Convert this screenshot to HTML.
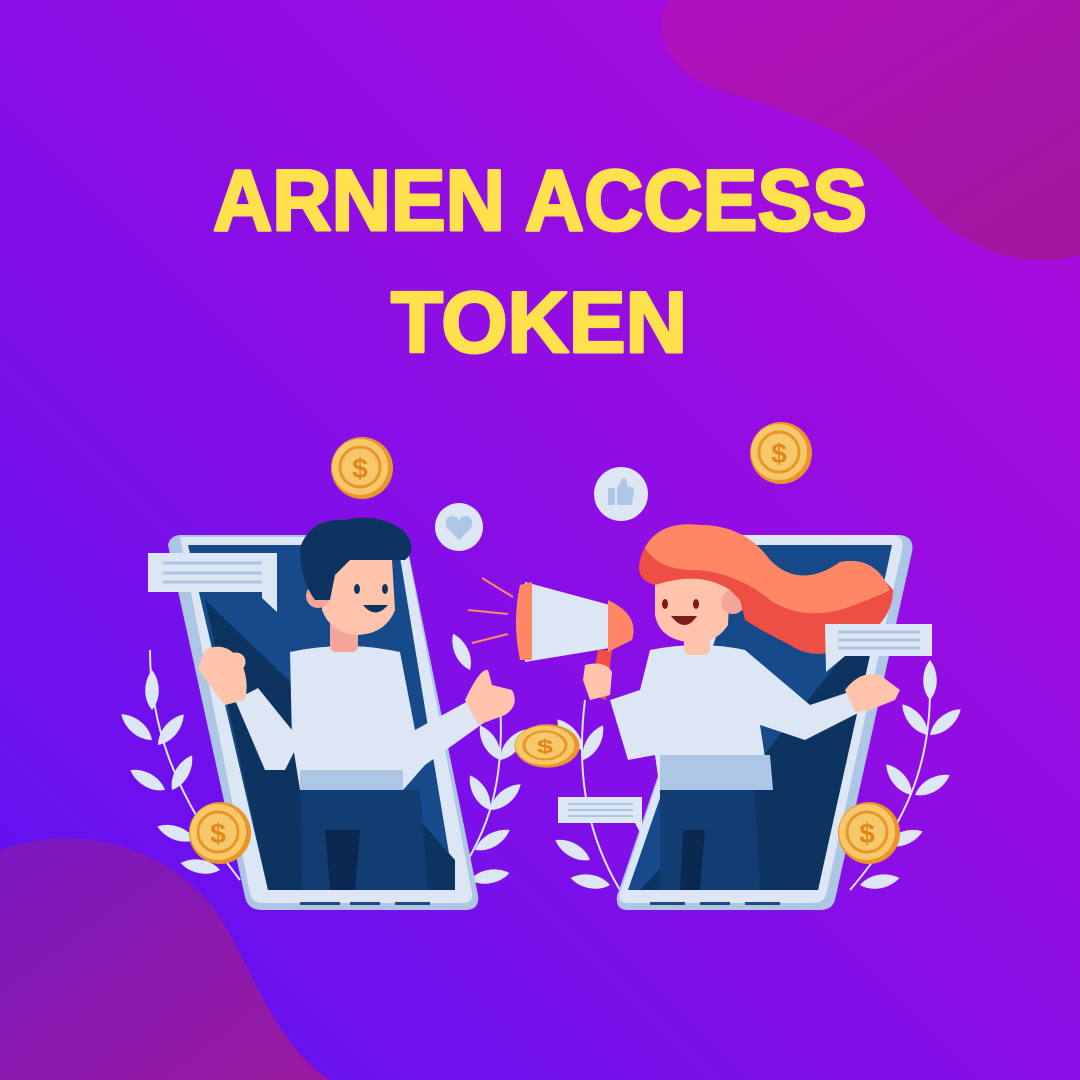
<!DOCTYPE html>
<html><head><meta charset="utf-8"><style>html,body{margin:0;padding:0;width:1080px;height:1080px;overflow:hidden}</style></head><body>
<svg width="1080" height="1080" viewBox="0 0 1080 1080" xmlns="http://www.w3.org/2000/svg">
<defs>
<linearGradient id="bg" x1="0" y1="1" x2="1" y2="0">
<stop offset="0" stop-color="#5a12f2"/><stop offset="0.5" stop-color="#8a0ee6"/><stop offset="1" stop-color="#b00ad8"/>
</linearGradient>
<linearGradient id="b1" x1="0" y1="0" x2="1" y2="1">
<stop offset="0" stop-color="#b010c0"/><stop offset="1" stop-color="#a0169a"/>
</linearGradient>
<linearGradient id="b2" x1="0" y1="0" x2="1" y2="1">
<stop offset="0" stop-color="#7a18c0"/><stop offset="1" stop-color="#9a1a9e"/>
</linearGradient>
<g id="coin"><circle r="31" fill="#e8962a"/><circle r="28" fill="#f7c86a" cx="-2" cy="-1"/><circle r="20" fill="none" stroke="#e8962a" stroke-width="3" cx="-2" cy="-1"/><text x="-2" y="10" font-family="Liberation Sans" font-weight="bold" font-size="28" fill="#e0861a" text-anchor="middle">$</text></g>
<g id="leaf"><path d="M0 0 C-10 -12 -8 -30 0 -40 C8 -30 10 -12 0 0Z" fill="#dce6f4"/></g>
</defs>
<rect width="1080" height="1080" fill="url(#bg)"/>
<path d="M670 0 L1080 0 L1080 255 C1000 275 940 230 900 180 C860 130 780 110 720 90 C660 70 650 20 670 0Z" fill="url(#b1)"/>
<path d="M0 850 C80 820 170 850 215 910 C250 960 270 1040 330 1080 L0 1080Z" fill="url(#b2)"/>
<g font-family="Liberation Sans" font-weight="bold" font-size="86" fill="#ffe14d" stroke="#ffe14d" stroke-width="3" stroke-linejoin="round">
<text x="540" y="230" text-anchor="middle" textLength="654" lengthAdjust="spacingAndGlyphs">ARNEN ACCESS</text>
<text x="539" y="352" text-anchor="middle" textLength="296" lengthAdjust="spacingAndGlyphs">TOKEN</text>
</g>

<!-- laurels -->
<g>
<path d="M150 650 C150 720 170 790 240 880" stroke="#dce6f4" stroke-width="2" fill="none"/>
<use href="#leaf" transform="translate(152,710) rotate(0)"/>
<use href="#leaf" transform="translate(152,740) rotate(-50)"/>
<use href="#leaf" transform="translate(158,745) rotate(40)"/>
<use href="#leaf" transform="translate(165,790) rotate(-60)"/>
<use href="#leaf" transform="translate(172,790) rotate(30)"/>
<use href="#leaf" transform="translate(195,840) rotate(-70)"/>
<use href="#leaf" transform="translate(220,870) rotate(-80)"/>
<path d="M500 700 C505 780 490 830 455 880" stroke="#dce6f4" stroke-width="2" fill="none"/>
<use href="#leaf" transform="translate(470,670) rotate(-25)"/>
<use href="#leaf" transform="translate(500,760) rotate(-30)"/>
<use href="#leaf" transform="translate(500,760) rotate(40)"/>
<use href="#leaf" transform="translate(490,810) rotate(-30)"/>
<use href="#leaf" transform="translate(490,810) rotate(50)"/>
<use href="#leaf" transform="translate(475,850) rotate(60)"/>
<use href="#leaf" transform="translate(470,880) rotate(80)"/>
<path d="M585 700 C575 780 590 840 620 890" stroke="#dce6f4" stroke-width="2" fill="none"/>
<use href="#leaf" transform="translate(583,750) rotate(-40)"/>
<use href="#leaf" transform="translate(583,760) rotate(30)"/>
<use href="#leaf" transform="translate(590,860) rotate(-60)"/>
<use href="#leaf" transform="translate(610,885) rotate(-80)"/>
<path d="M930 690 C930 760 910 820 850 890" stroke="#dce6f4" stroke-width="2" fill="none"/>
<use href="#leaf" transform="translate(930,700) rotate(0)"/>
<use href="#leaf" transform="translate(928,735) rotate(-40)"/>
<use href="#leaf" transform="translate(930,735) rotate(50)"/>
<use href="#leaf" transform="translate(912,795) rotate(-40)"/>
<use href="#leaf" transform="translate(915,795) rotate(60)"/>
<use href="#leaf" transform="translate(885,845) rotate(70)"/>
<use href="#leaf" transform="translate(860,885) rotate(80)"/>
</g>

<!-- left phone -->
<path d="M168 545 Q170 535 182 535 L405 535 L478 895 Q480 910 465 910 L262 910 Q248 910 245 897Z" fill="#aec6e6"/>
<path d="M180 537 L405 537 L472 893 Q473 903 463 903 L262 903 Q252 903 250 893Z" fill="#dce6f4"/>
<path d="M188 545 L398 545 L455 890 L268 890Z" fill="#164a8a"/>
<path d="M205 600 L330 720 L455 860 L455 890 L268 890Z" fill="#0d3461"/>
<rect x="300" y="902" width="40" height="3" fill="#274a7e"/><rect x="350" y="902" width="30" height="3" fill="#274a7e"/><rect x="395" y="902" width="35" height="3" fill="#274a7e"/>

<!-- right phone -->
<path d="M740 535 L900 535 Q915 537 912 552 L835 900 Q832 910 820 910 L628 910 Q615 910 617 896Z" fill="#aec6e6"/>
<path d="M740 535 L893 535 Q905 537 902 550 L826 895 Q823 903 813 903 L628 903 Q617 903 620 893Z" fill="#dce6f4"/>
<path d="M748 545 L892 545 L818 890 L628 890Z" fill="#164a8a"/>
<path d="M880 610 L818 890 L640 890 L760 760Z" fill="#0d3461"/>
<rect x="650" y="902" width="35" height="3" fill="#274a7e"/><rect x="700" y="902" width="30" height="3" fill="#274a7e"/><rect x="745" y="902" width="35" height="3" fill="#274a7e"/>

<!-- man -->
<path d="M300 790 L420 790 L428 890 L302 890Z" fill="#123d73"/>
<path d="M325 830 L360 830 L355 890 L330 890Z" fill="#0a2850"/>
<path d="M235 700 L258 688 L300 740 L285 770 L265 770Z" fill="#dce6f4"/>
<path d="M290 652 Q345 640 400 652 L415 730 L470 700 L485 722 L425 765 L403 790 L300 790 L292 740Z" fill="#dce6f4"/>
<path d="M300 770 L403 770 L403 790 L300 790Z" fill="#aec6e6"/>
<path d="M205 650 Q225 640 240 660 Q250 680 245 700 L225 705 Q205 680 198 668Z" fill="#ffc4ab"/>
<circle cx="236" cy="662" r="7" fill="none" stroke="#ffc4ab" stroke-width="5"/>
<path d="M465 700 Q480 668 488 670 L492 685 L512 690 Q520 705 505 715 L478 725Z" fill="#ffc4ab"/>
<rect x="330" y="620" width="28" height="32" rx="6" fill="#f4a69a"/>
<path d="M322 560 Q350 545 392 560 L395 610 Q385 635 355 635 Q330 632 322 610Z" fill="#ffc4ab"/>
<circle cx="318" cy="596" r="12" fill="#f4a69a"/>
<path d="M300 548 Q310 518 345 520 Q380 512 405 532 Q418 550 405 560 Q370 560 350 560 L335 575 L330 600 L315 600 Q300 580 300 548Z" fill="#0d3461"/>
<ellipse cx="357" cy="589" rx="3" ry="5" fill="#0d3461"/><ellipse cx="385" cy="589" rx="3" ry="5" fill="#0d3461"/>
<path d="M363 605 Q375 620 388 605Z" fill="#0d3461"/>

<!-- woman -->
<path d="M660 790 L755 790 L760 890 L660 890Z" fill="#123d73"/>
<path d="M683 830 L705 830 L700 890 L680 890Z" fill="#0a2850"/>
<path d="M650 650 Q700 640 745 650 L810 705 L855 690 L860 712 L805 740 L760 725 L770 790 L660 790 L655 755 L628 760 L610 700 L640 690Z" fill="#dce6f4"/>
<path d="M660 755 L770 755 L773 790 L660 790Z" fill="#aec6e6"/>
<path d="M845 690 Q860 670 880 675 L900 690 L895 700 L870 710 L855 712Z" fill="#ffc4ab"/>
<rect x="684" y="630" width="26" height="25" rx="6" fill="#ffc4ab"/>
<path d="M655 578 Q690 560 730 580 L728 625 Q715 645 690 642 Q660 640 655 615Z" fill="#ffc4ab"/>
<circle cx="733" cy="602" r="12" fill="#f4a69a"/>
<path d="M640 560 Q650 520 700 525 Q745 525 770 570 Q800 600 835 570 Q870 560 893 590 Q893 620 860 640 Q820 665 790 645 Q760 630 745 620 L740 600 L730 590 Q700 570 655 585 Q635 580 640 560Z" fill="#ed4f45"/>
<path d="M645 548 Q660 520 700 525 Q745 525 770 560 Q800 590 840 562 Q875 555 890 590 Q870 600 840 610 Q800 620 770 600 Q740 575 700 570 Q660 572 645 548Z" fill="#ff8765"/>
<ellipse cx="665" cy="604" rx="3" ry="5" fill="#7a1c1c"/><ellipse cx="696" cy="604" rx="3" ry="5" fill="#7a1c1c"/>
<path d="M671 616 Q685 634 697 616Z" fill="#7a1c1c"/>
<!-- megaphone -->
<path d="M598 650 L612 650 L606 700 L590 695Z" fill="#ed4f45"/>
<path d="M525 582 L610 605 L610 648 L525 662Z" fill="#dce6f4"/>
<path d="M520 585 Q512 622 520 660 L532 660 L532 582Z" fill="#ff8765"/>
<path d="M608 600 Q640 615 632 640 L608 652Z" fill="#ff8765"/>
<path d="M585 665 Q605 660 612 672 L610 695 L590 700 L583 680Z" fill="#ffc4ab"/>
<g stroke="#ff8765" stroke-width="2"><line x1="482" y1="578" x2="513" y2="597"/><line x1="468" y1="610" x2="508" y2="614"/><line x1="472" y1="643" x2="508" y2="634"/></g>

<!-- bubbles -->
<path d="M148 553 L277 553 L277 612 L262 598 L262 592 L148 592Z" fill="#dce6f4"/>
<g stroke="#aec6e6" stroke-width="3"><line x1="163" y1="563" x2="262" y2="563"/><line x1="163" y1="573" x2="262" y2="573"/><line x1="163" y1="582" x2="262" y2="582"/></g>
<path d="M825 624 L932 624 L932 656 L845 656 L826 672Z" fill="#dce6f4"/>
<g stroke="#aec6e6" stroke-width="3"><line x1="838" y1="632" x2="920" y2="632"/><line x1="838" y1="640" x2="920" y2="640"/><line x1="838" y1="648" x2="920" y2="648"/></g>
<path d="M558 797 L642 797 L642 836 L635 823 L558 823Z" fill="#dce6f4"/>
<g stroke="#aec6e6" stroke-width="2"><line x1="568" y1="804" x2="633" y2="804"/><line x1="568" y1="810" x2="633" y2="810"/><line x1="568" y1="816" x2="633" y2="816"/></g>
<circle cx="459" cy="527" r="24" fill="#dce6f4"/>
<path d="M459 540 L447 528 Q443 518 452 516 Q457 516 459 521 Q461 516 466 516 Q475 518 471 528Z" fill="#aec6e6"/>
<circle cx="621" cy="494" r="27" fill="#dce6f4"/>
<path d="M608 488 L615 488 L615 505 L608 505Z M617 488 L623 478 Q628 478 627 486 L634 488 L632 505 L617 505Z" fill="#aec6e6"/>

<!-- coins -->
<use href="#coin" transform="translate(362,468)"/>
<use href="#coin" transform="translate(781,453)"/>
<use href="#coin" transform="translate(220,833)"/>
<use href="#coin" transform="translate(869,833)"/>
<g transform="translate(547,746) scale(1.05,0.7)"><use href="#coin"/></g>
</svg>
</body></html>
